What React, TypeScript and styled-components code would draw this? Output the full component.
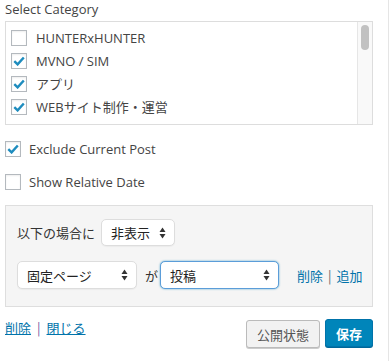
import React from "react";
import styled, { createGlobalStyle } from "styled-components";

const GlobalStyle = createGlobalStyle`
  html, body { margin: 0; padding: 0; background: #fff; }
  body {
    font-family: "Open Sans", "Noto Sans CJK JP", sans-serif;
    font-size: 13px;
    color: #444;
  }
  * { box-sizing: border-box; }
`;

const Panel = styled.div`
  width: 389px;
  height: 361px;
  border-right: 1px solid #e5e5e5;
  padding: 0 16px 0 5px;
  display: flex;
  flex-direction: column;
`;

const Title = styled.div`
  font-size: 13px;
  line-height: 18px;
  color: #444;
  margin-top: 0;
`;

const ListBox = styled.div`
  margin-top: 3px;
  width: 368px;
  height: 104px;
  border: 1px solid #ddd;
  display: flex;
  background: #fff;
`;

const Items = styled.ul`
  list-style: none;
  margin: 0;
  padding: 4px 0 0 5px;
  flex: 1;
`;

const Item = styled.li`
  height: 23px;
  display: flex;
  align-items: center;
  gap: 9px;
  color: #444;
  font-family: "Open Sans", "Noto Sans CJK JP", sans-serif;
`;

const Track = styled.div`
  width: 15px;
  border-left: 1px solid #e6e6e6;
  background: #f9f9f9;
  padding: 3px 0 0 3px;
`;

const Thumb = styled.div`
  width: 8px;
  height: 25px;
  border-radius: 4px;
  background: #c1c1c1;
`;

const Box = styled.span`
  width: 16px;
  height: 16px;
  flex: none;
  border: 1px solid #b4b9be;
  background: #fff;
  box-shadow: inset 0 1px 2px rgba(0, 0, 0, 0.07);
  display: flex;
  align-items: center;
  justify-content: center;
`;

const Check = ({ checked }: { checked?: boolean }) => (
  <Box>
    {checked && (
      <svg width="12" height="10" viewBox="0 0 12 10">
        <path d="M1.3 5.2 L4.6 8.4 L10.8 1.5" fill="none" stroke="#1e8cbe" strokeWidth="2.4" strokeLinejoin="miter" />
      </svg>
    )}
  </Box>
);

const Option = styled.div`
  display: flex;
  align-items: center;
  gap: 8px;
  height: 16px;
  color: #444;
`;

const Options = styled.div`
  margin-top: 16px;
  display: flex;
  flex-direction: column;
  gap: 17px;
`;

const Rules = styled.div`
  margin-top: 15px;
  width: 368px;
  height: 102px;
  border: 1px solid #dedede;
  background: #f5f5f5;
  padding: 13px 0 0 11px;
  display: flex;
  flex-direction: column;
  gap: 15px;
  font-family: "Noto Sans CJK JP", sans-serif;
`;

const RuleRow = styled.div`
  display: flex;
  align-items: center;
  white-space: nowrap;
`;

const Label = styled.span<{ $left?: number; $right?: number }>`
  margin-left: ${(p) => p.$left ?? 0}px;
  margin-right: ${(p) => p.$right ?? 0}px;
  color: #333;
  font-size: 13px;
  flex: none;
`;

const Select = styled.div<{ $w: number; $h: number; $focus?: boolean }>`
  width: ${(p) => p.$w}px;
  height: ${(p) => p.$h}px;
  flex: none;
  background: #fff;
  border: 1px solid ${(p) => (p.$focus ? "#5b9dd9" : "#dddddd")};
  box-shadow: ${(p) => (p.$focus ? "0 0 2px rgba(30,140,190,.8)" : "0 1px 1px rgba(0,0,0,.04)")};
  border-radius: 5px;
  display: flex;
  align-items: center;
  justify-content: space-between;
  padding: 0 8px 0 9px;
  font-size: 13px;
  color: #222;
`;

const Arrows = () => (
  <svg width="7" height="12" viewBox="0 0 7 12">
    <path d="M3.5 0.5 L6.5 5 L0.5 5 Z" fill="#333" />
    <path d="M3.5 11.5 L6.5 7 L0.5 7 Z" fill="#333" />
  </svg>
);

const Actions = styled.span`
  margin-left: 18px;
  color: #0073aa;
  font-size: 13px;
  display: flex;
  flex: none;
  gap: 5px;
`;

const Sep = styled.span`
  color: #666;
`;

const Footer = styled.div`
  margin-top: 12px;
  width: 368px;
  display: flex;
  justify-content: space-between;
  align-items: flex-start;
  font-family: "Noto Sans CJK JP", sans-serif;
`;

const Links = styled.div`
  display: flex;
  gap: 6px;
  font-size: 13px;
  margin-top: -1px;
`;

const Link = styled.a`
  color: #0073aa;
  text-decoration: underline;
`;

const FootSep = styled.span`
  color: #7a5aa0;
`;

const Buttons = styled.div`
  display: flex;
  gap: 5px;
`;

const Button = styled.button<{ $primary?: boolean; $w: number }>`
  width: ${(p) => p.$w}px;
  height: 28px;
  padding: 0;
  border-radius: 3px;
  font-family: "Noto Sans CJK JP", sans-serif;
  font-size: 13px;
  border: 1px solid ${(p) => (p.$primary ? "#0073aa" : "#bbb")};
  background: ${(p) => (p.$primary ? "#0085ba" : "#f2f2f2")};
  color: ${(p) => (p.$primary ? "#fff" : "#555")};
  font-weight: ${(p) => (p.$primary ? 700 : 400)};
  box-shadow: ${(p) => (p.$primary ? "0 1px 0 #006799" : "0 1px 0 #ccc")};
  margin-top: ${(p) => (p.$primary ? 0 : 1)}px;
`;

const categories = [
  { name: "HUNTERxHUNTER", checked: false },
  { name: "MVNO / SIM", checked: true },
  { name: "アプリ", checked: true },
  { name: "WEBサイト制作・運営", checked: true },
];

export default function App() {
  return (
    <>
      <GlobalStyle />
      <Panel>
        <Title>Select Category</Title>
        <ListBox>
          <Items>
            {categories.map((c) => (
              <Item key={c.name}>
                <Check checked={c.checked} />
                {c.name}
              </Item>
            ))}
          </Items>
          <Track>
            <Thumb />
          </Track>
        </ListBox>
        <Options>
          <Option>
            <Check checked />
            Exclude Current Post
          </Option>
          <Option>
            <Check />
            Show Relative Date
          </Option>
        </Options>
        <Rules>
          <RuleRow>
            <Label $right={6}>以下の場合に</Label>
            <Select $w={74} $h={27}>
              非表示
              <Arrows />
            </Select>
          </RuleRow>
          <RuleRow>
            <Select $w={120} $h={28}>
              固定ページ
              <Arrows />
            </Select>
            <Label $left={8} $right={2}>が</Label>
            <Select $w={119} $h={28} $focus>
              投稿
              <Arrows />
            </Select>
            <Actions>
              <span>削除</span>
              <Sep>|</Sep>
              <span>追加</span>
            </Actions>
          </RuleRow>
        </Rules>
        <Footer>
          <Links>
            <Link href="#">削除</Link>
            <FootSep>|</FootSep>
            <Link href="#">閉じる</Link>
          </Links>
          <Buttons>
            <Button $w={74}>公開状態</Button>
            <Button $w={48} $primary>保存</Button>
          </Buttons>
        </Footer>
      </Panel>
    </>
  );
}
